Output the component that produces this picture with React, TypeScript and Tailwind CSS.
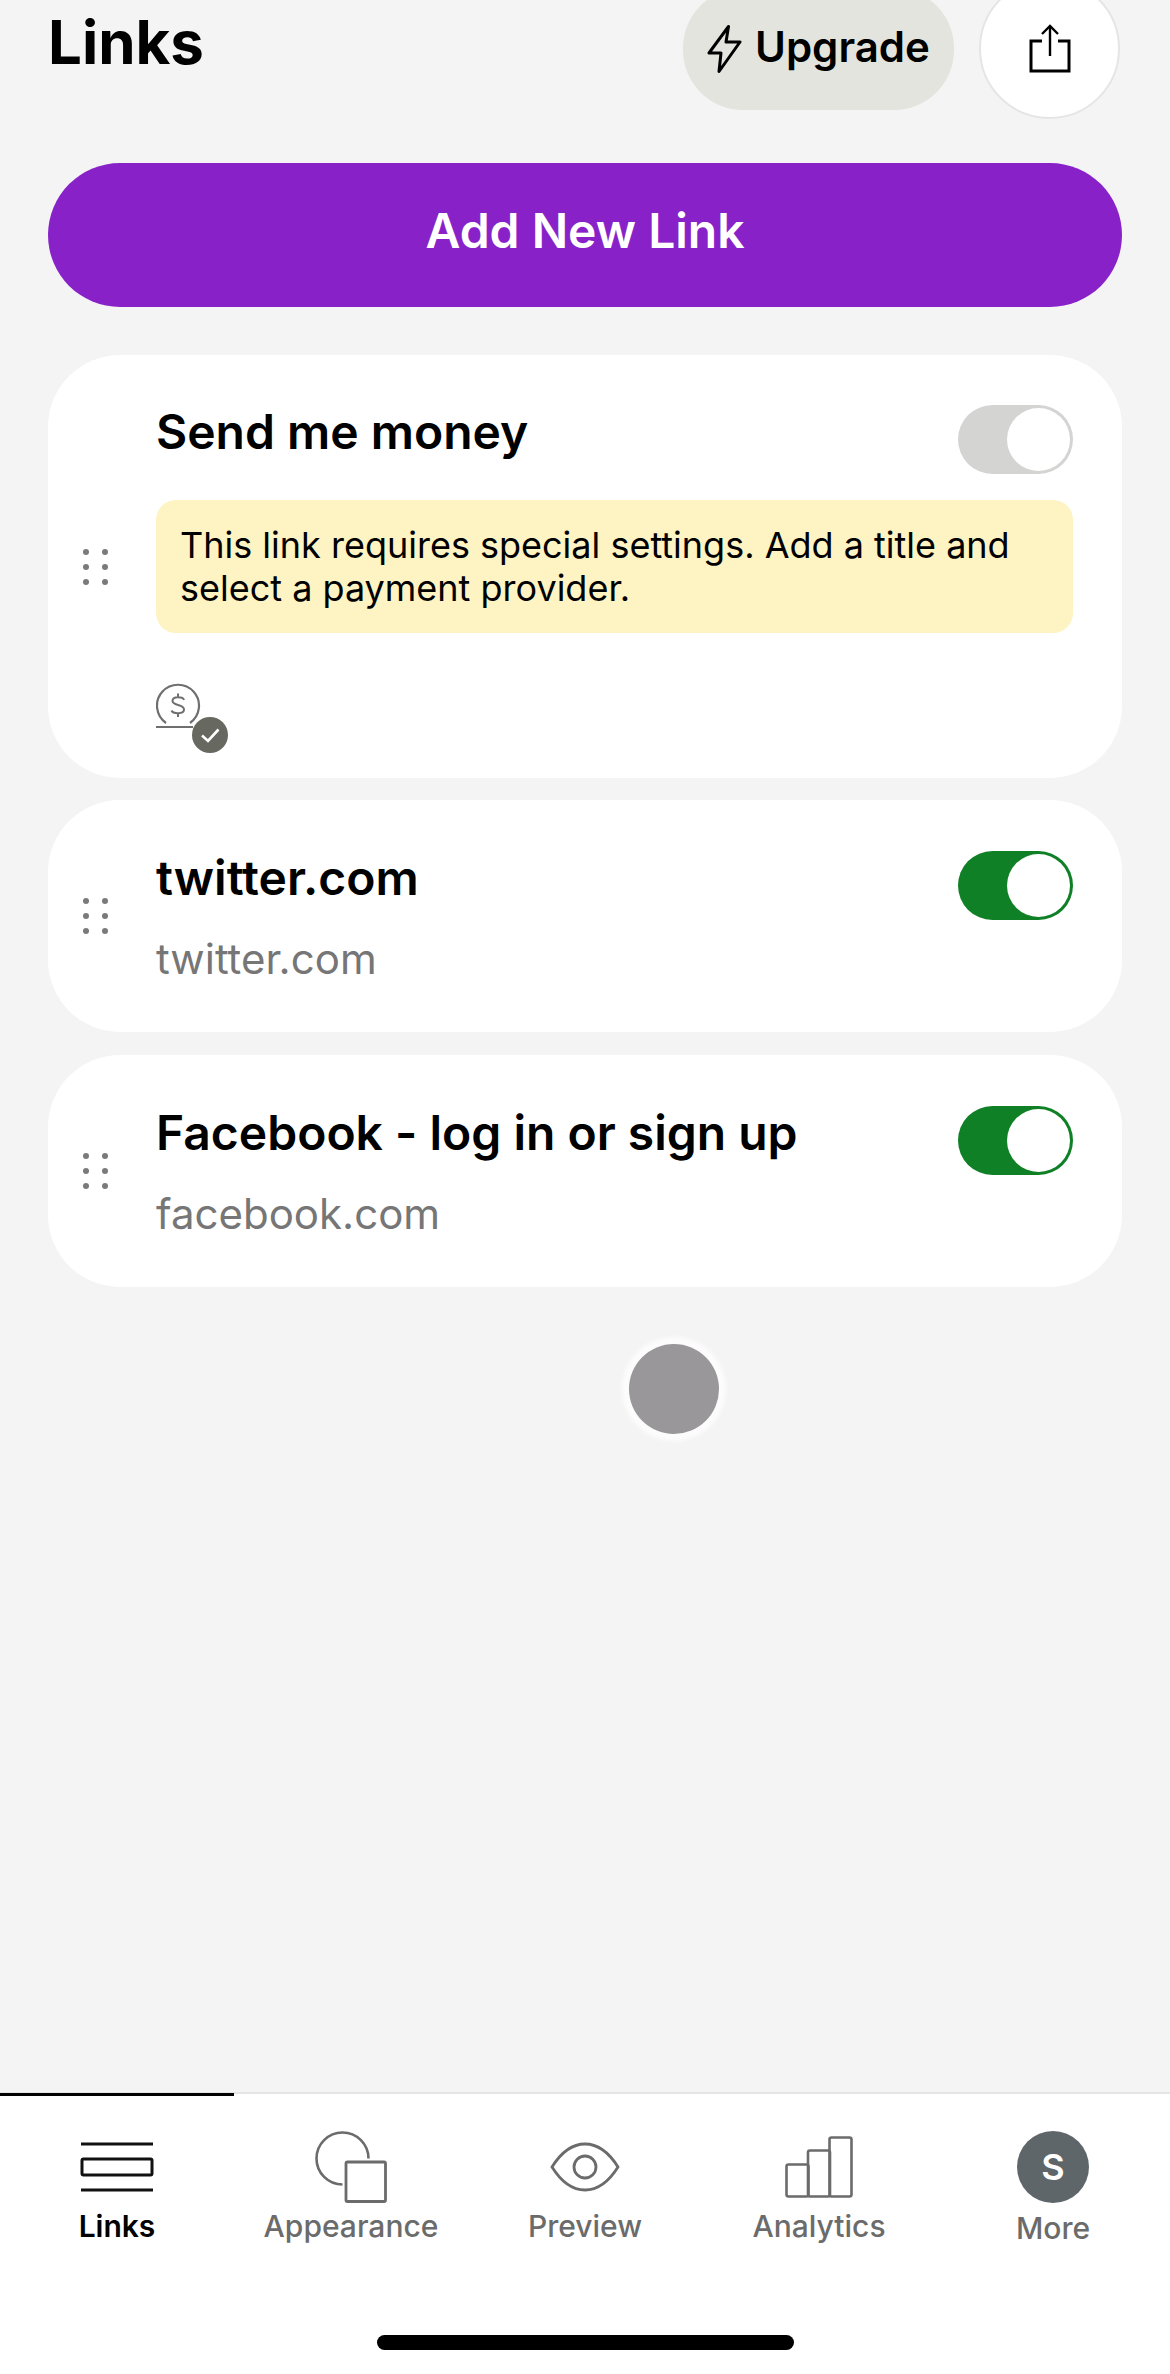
import React from "react";

const Dots = () => (
  <div className="w-[108px] shrink-0 pl-[35px] flex items-center">
    <div className="grid grid-cols-2 gap-x-[13px] gap-y-[9px]">
      {[0, 1, 2, 3, 4, 5].map((i) => (
        <span key={i} className="block w-[6px] h-[6px] rounded-full bg-[#7a7a7a]" />
      ))}
    </div>
  </div>
);

const Toggle = ({ on }: { on: boolean }) => (
  <div
    className={`w-[115px] h-[69px] rounded-full shrink-0 flex items-center justify-end pr-[3px] ${on ? "bg-[#0f8026]" : "bg-[#d4d4d2]"}`}
  >
    <div className="w-[63px] h-[63px] rounded-full bg-white" />
  </div>
);

const LinkCard = ({ title, url, className }: { title: string; url: string; className: string }) => (
  <div className={`h-[232px] rounded-[72px] bg-white flex ${className}`}>
    <Dots />
    <div className="flex-1 pr-[49px] pt-[51px] flex justify-between items-start">
      <div className="-mt-[2px]">
        <div className="text-[48px] leading-[58px] font-semibold text-black">{title}</div>
        <div className="mt-[23px] text-[42px] leading-[58px] text-[#767676]">{url}</div>
      </div>
      <Toggle on />
    </div>
  </div>
);

const MoneyIcon = () => (
  <svg width="76" height="70" viewBox="0 0 76 70" fill="none" className="block">
    <path d="M10 40 A21 21 0 1 1 34 40" stroke="#6f6f6f" strokeWidth="2.2" />
    <path d="M0 44 H37" stroke="#6f6f6f" strokeWidth="2.2" />
    <path
      d="M28 17 C27 13.5 16.5 13 16.5 18 C16.5 23 28 21 28 26.5 C28 31.5 17 31 15.5 27.5 M22 10.5 V14 M22 30.5 V34"
      stroke="#6f6f6f"
      strokeWidth="2"
    />
    <circle cx="54" cy="52" r="18" fill="#676860" />
    <path d="M46 52.5 L52 58 L62.5 46.5" stroke="#fff" strokeWidth="2.6" />
  </svg>
);

const Tab = ({ label, active, children, offset }: { label: string; active?: boolean; children: React.ReactNode; offset?: boolean }) => (
  <div className="flex flex-col items-center">
    <div className="h-[74px] flex items-center justify-center">{children}</div>
    <div
      className={`h-[36px] leading-[36px] text-[30px] ${offset ? "mt-[6px]" : "mt-[4px]"} ${active ? "text-black font-semibold" : "text-[#6b6b6b] font-medium"}`}
    >
      {label}
    </div>
  </div>
);

export default function App() {
  return (
    <div
      className="w-[1170px] h-[2374px] overflow-hidden bg-[#f5f4f4] flex flex-col relative"
      style={{ fontFamily: "Inter, 'Liberation Sans', sans-serif" }}
    >
      <div className="flex-1 px-[48px]">
        <header className="-mt-[22px] h-[141px] flex items-center justify-between">
          <h1 className="text-[60px] leading-[72px] font-bold text-black -mt-[13px]">Links</h1>
          <div className="flex items-center pr-[2px]">
            <div className="h-[122px] w-[271px] rounded-[60px] bg-[#e3e4de] flex items-center pl-[24px] gap-[13px]">
              <svg width="35" height="48" viewBox="0 0 35 48" fill="none" className="shrink-0">
                <path
                  d="M21.5 1.5 L2 28 H14 L12 46.5 L33 17 H19 Z"
                  stroke="#000"
                  strokeWidth="3"
                  strokeLinejoin="round"
                />
              </svg>
              <span className="text-[42px] leading-[50px] font-semibold text-black -mt-[3px]">Upgrade</span>
            </div>
            <div className="ml-[25px] w-[141px] h-[141px] rounded-full bg-white border-2 border-[#e6e5e4] flex items-center justify-center">
              <svg width="44" height="50" viewBox="0 0 44 50" fill="none">
                <path d="M22 2 V32" stroke="#000" strokeWidth="2.4" />
                <path d="M14 10 L22 2 L30 10" stroke="#000" strokeWidth="2.4" />
                <path d="M14 17 H3 V47 H41 V17 H30" stroke="#000" strokeWidth="3" />
              </svg>
            </div>
          </div>
        </header>

        <button className="mt-[44px] w-full h-[144px] rounded-full bg-[#8822c8] text-white text-[48px] font-semibold flex items-center justify-center pb-[8px]">
          Add New Link
        </button>

        <div className="mt-[48px] h-[423px] rounded-[72px] bg-white flex">
          <Dots />
          <div className="flex-1 pr-[49px] pt-[50px]">
            <div className="flex justify-between items-start">
              <div className="text-[48px] leading-[58px] font-semibold text-black -mt-[2px]">Send me money</div>
              <Toggle on={false} />
            </div>
            <div className="mt-[26px] h-[133px] rounded-[20px] bg-[#fef3c2] px-[24px] pt-[24px] text-[36px] leading-[43px] text-black">
              This link requires special settings. Add a title and select a payment provider.
            </div>
            <div className="mt-[50px]">
              <MoneyIcon />
            </div>
          </div>
        </div>

        <LinkCard className="mt-[22px]" title="twitter.com" url="twitter.com" />
        <LinkCard className="mt-[23px]" title="Facebook - log in or sign up" url="facebook.com" />
      </div>

      <div className="absolute left-[629px] top-[1344px] w-[90px] h-[90px] rounded-full bg-[#99979a] shadow-[0_0_4px_7px_rgba(255,255,255,0.75)]" />

      <nav className="h-[282px] bg-white border-t-2 border-[#e5e5e7] relative shrink-0 pt-[36px] flex flex-col">
        <div className="absolute left-0 -top-[1px] w-[234px] h-[3px] bg-black" />
        <div className="grid grid-cols-5">
          <Tab label="Links" active>
            <svg width="74" height="50" viewBox="0 0 74 50" fill="none">
              <path d="M1 2 H73 M1 48 H73" stroke="#111" strokeWidth="3" />
              <rect x="2" y="17" width="70" height="16" rx="1.5" stroke="#111" strokeWidth="3" />
            </svg>
          </Tab>
          <Tab label="Appearance">
            <svg width="72" height="72" viewBox="0 0 72 72" fill="none">
              <path d="M53.5 27.5 A26 26 0 1 0 27.5 53.5" stroke="#6b6b6b" strokeWidth="2.6" />
              <rect x="31" y="31" width="39.5" height="39.5" rx="1.5" stroke="#6b6b6b" strokeWidth="2.8" />
            </svg>
          </Tab>
          <Tab label="Preview">
            <svg width="70" height="50" viewBox="0 0 70 50" fill="none">
              <path
                d="M2 25 C12 9 23 2 35 2 C47 2 58 9 68 25 C58 41 47 48 35 48 C23 48 12 41 2 25 Z"
                stroke="#6b6b6b"
                strokeWidth="2.8"
              />
              <circle cx="35" cy="25" r="11" stroke="#6b6b6b" strokeWidth="2.8" />
            </svg>
          </Tab>
          <Tab label="Analytics">
            <svg width="68" height="62" viewBox="0 0 68 62" fill="none">
              <rect x="1.5" y="28.5" width="22" height="32" rx="2" stroke="#6b6b6b" strokeWidth="2.6" />
              <rect x="23" y="14.5" width="22" height="46" rx="2" stroke="#6b6b6b" strokeWidth="2.6" />
              <rect x="44.5" y="1.5" width="22" height="59" rx="2" stroke="#6b6b6b" strokeWidth="2.6" />
            </svg>
          </Tab>
          <Tab label="More" offset>
            <div className="w-[72px] h-[72px] rounded-full bg-[#5f666a] flex items-center justify-center text-white text-[36px] font-semibold">
              S
            </div>
          </Tab>
        </div>
        <div className="mt-auto mb-[24px] mx-auto w-[417px] h-[15px] rounded-full bg-black" />
      </nav>
    </div>
  );
}
